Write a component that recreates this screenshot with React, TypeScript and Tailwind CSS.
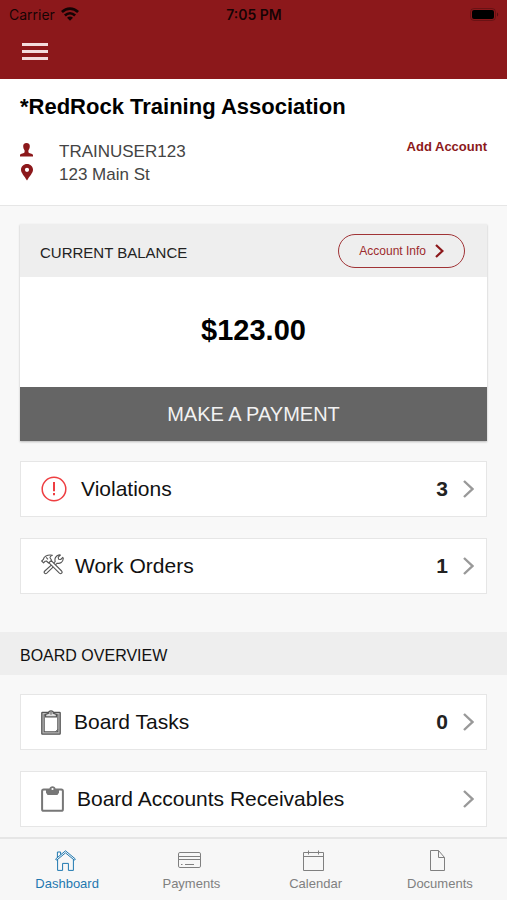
import type { ReactNode } from 'react';

interface MenuRowProps {
  icon:    ReactNode;
  label:   string;
  count?:  number;
  gap:     string;
}

interface TabItem {
  label:   string;
  icon:    ReactNode;
  active?: boolean;
}

function WifiIcon() {
  return (
    <svg width="18" height="14" viewBox="0 0 18 14" fill="none" stroke="currentColor" strokeWidth="2.7" aria-hidden="true">
      <path d="M0.9 5 C5.5 0.4 12.5 0.4 17.1 5" />
      <path d="M3.9 8.4 C7 5.5 11 5.5 14.1 8.4" />
      <path d="M9 13.8 L6 10.8 C7.8 9.1 10.2 9.1 12 10.8 Z" fill="currentColor" stroke="none" />
    </svg>
  );
}

function BatteryIcon() {
  return (
    <svg width="29" height="13" viewBox="0 0 29 13" aria-hidden="true">
      <rect x="0.5" y="0.5" width="25" height="12" rx="3.5" fill="none" stroke="#000" strokeOpacity="0.25" />
      <rect x="2" y="2" width="22" height="9" rx="2" fill="#000" />
      <path d="M27 4.5 C28.6 5 28.6 8 27 8.5 Z" fill="#000" fillOpacity="0.4" />
    </svg>
  );
}

function PersonIcon() {
  return (
    <svg width="13" height="14" viewBox="0 0 13 14" fill="#8c181b" aria-hidden="true">
      <path d="M6.5 0 C8.8 0 10 1.4 9.8 3.6 C9.7 5.4 9.1 6.6 8.4 7.4 L8.4 9.2 C8.6 10.2 12.6 10.4 13 12 L13 13.6 L0 13.6 L0 12 C0.4 10.4 4.4 10.2 4.6 9.2 L4.6 7.4 C3.9 6.6 3.3 5.4 3.2 3.6 C3 1.4 4.2 0 6.5 0 Z" />
    </svg>
  );
}

function PinIcon() {
  return (
    <svg width="12" height="17" viewBox="0 0 12 17" fill="#8c181b" fillRule="evenodd" aria-hidden="true">
      <path d="M6 0 C9.4 0 12 2.5 12 5.8 C12 9 8.6 12 6 16.6 C3.4 12 0 9 0 5.8 C0 2.5 2.6 0 6 0 Z M6 3.7 A2.1 2.1 0 1 0 6 7.9 A2.1 2.1 0 1 0 6 3.7 Z" />
    </svg>
  );
}

function Chevron() {
  return (
    <svg width="11" height="18" viewBox="0 0 11 18" fill="none" stroke="#999" strokeWidth="2.4" aria-hidden="true">
      <path d="M1 1 L9.4 9 L1 17" />
    </svg>
  );
}

function AlertIcon() {
  return (
    <svg width="26" height="26" viewBox="0 0 26 26" fill="none" stroke="#ee3e41" aria-hidden="true">
      <circle cx="13" cy="13" r="11.8" strokeWidth="1.5" />
      <path d="M13 6 V15.2" strokeWidth="2" />
      <path d="M13 17 V19.2" strokeWidth="2" />
    </svg>
  );
}

function ToolsIcon() {
  return (
    <svg width="23" height="21" viewBox="0 0 23 21" fill="#fff" stroke="#555" strokeWidth="1.1" strokeLinejoin="round" aria-hidden="true">
      {/* wrench */}
      <path d="M3.8 17 L14.2 7.6 C13.3 4.6 14.8 1.6 18.2 0.9 L19.4 1.1 L17.2 3.2 L17.6 5.2 L19.7 5.5 L21.8 3.4 L22.3 4.5 C22 8.2 19 9.9 16.2 9.2 L5.8 19.2 C4.2 20.6 2.2 18.6 3.8 17 Z" />
      {/* hammer */}
      <path d="M10 6.4 L20.6 17 C22 18.6 20 20.6 18.4 19.2 L7.8 8.6 Z" />
      <path d="M0.7 7 L2.4 5.4 C2.6 2.6 6 0.4 11.4 1.2 C9.6 1.8 8.9 2.7 9 3.8 L10.6 6.2 L7.6 9 L5.4 7 L4.2 7.2 L2.6 8.9 Z" />
      <path d="M5.2 3.4 L7 5.4" />
    </svg>
  );
}

function TasksIcon() {
  return (
    <svg width="20" height="25" viewBox="0 0 20 25" fill="none" stroke="#555" aria-hidden="true">
      <rect x="1.9" y="3.4" width="16.2" height="19.8" fill="none" stroke="#bbb" strokeWidth="2" />
      <rect x="0.8" y="2.4" width="18.4" height="21.8" rx="0.6" strokeWidth="1.3" />
      <rect x="3.2" y="4.8" width="13.6" height="17" fill="#fff" strokeWidth="1.1" />
      <path d="M14.6 21.8 L16.8 19.4" strokeWidth="1" />
      <path d="M4.6 6.8 V4.4 L7.4 3.4 C7.8 0 12.2 0 12.6 3.4 L15.4 4.4 V6.8 Z" fill="#ddd" strokeWidth="1.2" />
      <circle cx="10" cy="3.4" r="0.9" fill="#fff" strokeWidth="0.8" />
    </svg>
  );
}

function ClipboardIcon() {
  return (
    <svg width="23" height="26" viewBox="0 0 23 26" fill="none" stroke="#777" aria-hidden="true">
      <rect x="1.1" y="3.6" width="20.8" height="21.2" rx="1.6" strokeWidth="2" />
      <path d="M5 3 H8.4 C8.6 -0.8 14.4 -0.8 14.6 3 H18 V6.8 L16.4 9 H6.6 L5 6.8 Z" fill="#777" stroke="none" />
      <circle cx="11.5" cy="3" r="1.1" fill="#fff" stroke="none" />
    </svg>
  );
}

function HomeIcon() {
  return (
    <svg width="21" height="21" viewBox="0 0 21 21" fill="none" stroke="currentColor" strokeWidth="1" strokeLinejoin="round" aria-hidden="true">
      <path d="M0.6 9 L10.5 0.8 L20.4 9 L19.4 10.2 L10.5 2.9 L1.6 10.2 Z" />
      <path d="M2.6 9.6 V20.4 H7.6 V13.4 H13.4 V20.4 H18.4 V9.6" />
      <path d="M2.4 7.2 V2 H5.6 V4.6" />
    </svg>
  );
}

function CardIcon() {
  return (
    <svg width="23" height="17" viewBox="0 0 23 17" fill="none" stroke="currentColor" strokeWidth="1" aria-hidden="true">
      <rect x="0.5" y="0.5" width="22" height="15" rx="1.4" />
      <path d="M0.5 4.5 H22.5 M0.5 7.5 H22.5" />
      <path d="M3 12.5 H4.5 M7 12.5 H16" />
    </svg>
  );
}

function CalendarIcon() {
  return (
    <svg width="21" height="21" viewBox="0 0 21 21" fill="none" stroke="currentColor" strokeWidth="1" aria-hidden="true">
      <path d="M0.5 2.5 H20.5 V20.5 H0.5 Z M0.5 6.5 H20.5" />
      <path d="M5.5 0.5 V4.5 M15.5 0.5 V4.5" />
    </svg>
  );
}

function DocumentIcon() {
  return (
    <svg width="15" height="21" viewBox="0 0 15 21" fill="none" stroke="currentColor" strokeWidth="1" aria-hidden="true">
      <path d="M0.5 0.5 H8.5 L14.5 7.5 V20.5 H0.5 Z" />
      <path d="M8.5 0.5 V7.5 H14.5" />
    </svg>
  );
}

function MenuRow({ icon, label, count, gap }: MenuRowProps) {
  return (
    <a
      href="#"
      className="flex h-14 items-center justify-between border border-[#e6e6e6] bg-white pr-3 pl-5 text-[21px] text-[#111]"
    >
      <span className={`flex items-center ${gap}`}>
        {icon}
        {label}
      </span>
      <span className="flex items-center gap-[15px] font-bold text-[#222]">
        {count}
        <Chevron />
      </span>
    </a>
  );
}

const tabs: TabItem[] = [
  { label: 'Dashboard', icon: <HomeIcon />, active: true },
  { label: 'Payments', icon: <CardIcon /> },
  { label: 'Calendar', icon: <CalendarIcon /> },
  { label: 'Documents', icon: <DocumentIcon /> },
];

export default function App() {
  return (
    <div className="flex min-h-screen flex-col bg-[#f8f8f8] font-['Liberation_Sans',Arial,sans-serif] text-black">
      <header className="h-[79px] bg-[#8c181b]">
        <div className="grid h-7 grid-cols-3 items-center pr-2 pl-[9px] font-[Inter,sans-serif] text-[14px] text-black/85">
          <div className="flex items-center gap-[6px]">
            <span>Carrier</span>
            <WifiIcon />
          </div>
          <span className="text-center font-semibold">7:05 PM</span>
          <div className="flex justify-end">
            <BatteryIcon />
          </div>
        </div>
        <button type="button" aria-label="Open menu" className="mt-[15px] ml-[22px] flex w-[26px] flex-col gap-1">
          <span className="h-[3px] w-full bg-[#f3dcdd]" />
          <span className="h-[3px] w-full bg-[#f3dcdd]" />
          <span className="h-[3px] w-full bg-[#f3dcdd]" />
        </button>
      </header>

      <section className="h-[127px] border-b border-[#e6e6e6] bg-white px-5 pt-[14px]">
        <h1 className="text-[22px] leading-7 font-bold">*RedRock Training Association</h1>
        <div className="mt-[18px] flex items-start justify-between">
          <div className="pt-px text-[17px] leading-[23px] text-[#444]">
            <p className="flex items-center">
              <span className="mr-[26px] flex w-[13px] justify-center pb-1"><PersonIcon /></span>
              TRAINUSER123
            </p>
            <p className="flex items-center">
              <span className="mr-[26px] flex w-[13px] justify-center pb-1"><PinIcon /></span>
              123 Main St
            </p>
          </div>
          <a href="#" className="text-[13px] leading-4 font-bold text-[#8c181b]">Add Account</a>
        </div>
      </section>

      <main className="pb-[10px]">
        <section className="mx-5 mt-[18px] bg-white shadow-[0_1px_2px_rgba(0,0,0,0.25)]">
          <div className="flex h-[53px] items-center justify-between bg-[#eee] pr-[22px] pl-5">
            <h2 className="pt-1 text-[15px] leading-5 text-[#222]">CURRENT BALANCE</h2>
            <button
              type="button"
              className="flex h-[34px] items-center gap-[9px] rounded-full border border-[#a03336] px-5 text-[12px] text-[#9c2a2d]"
            >
              Account Info
              <svg width="9" height="14" viewBox="0 0 9 14" fill="none" stroke="#8c181b" strokeWidth="2.2" aria-hidden="true">
                <path d="M1 1 L7.4 7 L1 13" />
              </svg>
            </button>
          </div>
          <p className="flex h-[110px] items-center justify-center pb-[2px] text-[29px] font-bold">$123.00</p>
          <button type="button" className="h-[54px] w-full bg-[#656565] text-[20px] text-[#f2f2f2]">
            MAKE A PAYMENT
          </button>
        </section>

        <div className="mx-5 mt-5 flex flex-col gap-[21px]">
          <MenuRow icon={<AlertIcon />} label="Violations" count={3} gap="gap-[14px]" />
          <MenuRow icon={<span className="pb-1"><ToolsIcon /></span>} label="Work Orders" count={1} gap="gap-[11px]" />
        </div>

        <h2 className="mt-[38px] flex h-[43px] items-center bg-[#eee] px-5 pt-1 text-[16px] text-[#111]">
          BOARD OVERVIEW
        </h2>

        <div className="mx-5 mt-[19px] flex flex-col gap-[21px]">
          <MenuRow icon={<TasksIcon />} label="Board Tasks" count={0} gap="gap-[13px]" />
          <MenuRow icon={<ClipboardIcon />} label="Board Accounts Receivables" gap="gap-[13px]" />
        </div>
      </main>

      <nav className="mt-auto grid h-[63px] grid-cols-4 border-t-2 border-[#e6e6e6] bg-[#f7f7f7] px-[5px]">
        {tabs.map((tab) => (
          <a
            key={tab.label}
            href="#"
            aria-current={tab.active ? 'page' : undefined}
            className={`flex flex-col items-center pt-[10px] text-[13px] leading-4 ${tab.active ? 'text-[#1f78b0]' : 'text-[#808080]'}`}
          >
            <span className="mr-1 flex h-[23px] items-center">{tab.icon}</span>
            <span className="mt-1">{tab.label}</span>
          </a>
        ))}
      </nav>
    </div>
  );
}
